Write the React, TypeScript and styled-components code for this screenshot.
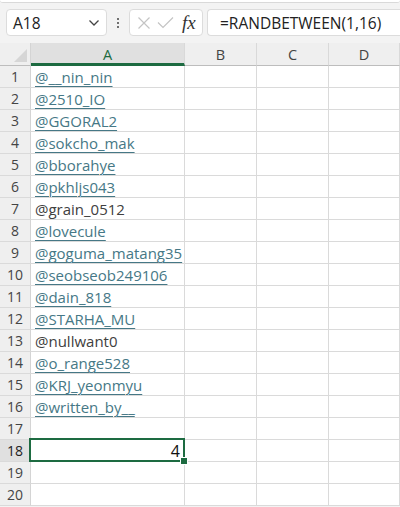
import React from "react";
import styled, { createGlobalStyle } from "styled-components";

const Global = createGlobalStyle`
  html, body { margin: 0; padding: 0; background: #f3f3f3; }
  body { font-family: "Open Sans", "Noto Sans", sans-serif; overflow: hidden; }
  * { box-sizing: border-box; }
`;

const Page = styled.div`
  width: 400px;
  height: 507px;
  background: #f3f3f3;
  display: flex;
  flex-direction: column;
  overflow: hidden;
`;

const RibbonEdge = styled.div`
  height: 3px;
  background: #ffffff;
  border-bottom: 1px solid #d9d9d9;
  border-radius: 0 0 6px 6px;
`;

const FormulaBar = styled.div`
  display: flex;
  align-items: center;
  height: 27px;
  margin-top: 6px;
  padding-left: 6px;
`;

const NameBox = styled.div`
  width: 101px;
  height: 27px;
  background: #fff;
  border: 1px solid #dcdcdc;
  border-radius: 4px;
  display: flex;
  align-items: center;
  justify-content: space-between;
  padding: 0 6px 0 6px;
  font-size: 15.5px;
  color: #222;
`;

const Dots = styled.div`
  width: 22px;
  display: flex;
  flex-direction: column;
  align-items: center;
  gap: 2px;
  span {
    width: 2px;
    height: 2px;
    background: #444;
    border-radius: 1px;
  }
`;

const FxBox = styled.div`
  width: 74px;
  height: 27px;
  background: #fff;
  border: 1px solid #dcdcdc;
  border-radius: 4px;
  display: flex;
  align-items: center;
  padding-left: 7px;
  gap: 6px;
`;

const FxLabel = styled.span`
  font-family: "Liberation Serif", "DejaVu Serif", serif;
  font-style: italic;
  font-size: 19px;
  color: #333;
  margin-left: 2px;
`;

const FormulaInput = styled.div`
  flex: 1;
  margin-left: 4px;
  height: 27px;
  background: #fff;
  border: 1px solid #dcdcdc;
  border-right: none;
  border-radius: 4px 0 0 4px;
  display: flex;
  align-items: center;
  padding-left: 12px;
  font-size: 15.5px;
  color: #222;
`;

const Sheet = styled.div`
  margin-top: 7px;
  display: grid;
  grid-template-columns: 31px 154px 72px 72px 1fr;
  grid-auto-rows: 22px;
  grid-template-rows: 23px;
  background: #fff;
`;

const Corner = styled.div`
  background: #efefef;
  border-right: 1px solid #d4d4d4;
  border-bottom: 1px solid #bdbdbd;
  display: flex;
  align-items: flex-end;
  justify-content: flex-end;
  padding: 0 3px 3px 0;
`;

const ColHead = styled.div<{ $active?: boolean }>`
  background: ${(p) => (p.$active ? "#e0e0e0" : "#efefef")};
  border-right: 1px solid #d9d9d9;
  border-bottom: ${(p) => (p.$active ? "3px solid #1d6b41" : "1px solid #bdbdbd")};
  display: flex;
  align-items: center;
  justify-content: center;
  font-size: 14.5px;
  color: ${(p) => (p.$active ? "#1d6b41" : "#444")};
  padding-top: ${(p) => (p.$active ? "2px" : "0")};
`;

const RowHead = styled.div<{ $active?: boolean }>`
  background: ${(p) => (p.$active ? "#e0e0e0" : "#efefef")};
  border-right: 1px solid #d4d4d4;
  border-bottom: 1px solid #dadada;
  display: flex;
  align-items: center;
  justify-content: center;
  font-size: 14px;
  color: ${(p) => (p.$active ? "#222" : "#444")};
`;

const Cell = styled.div<{ $align?: "left" | "right"; $selected?: boolean }>`
  position: relative;
  border-right: 1px solid #dadada;
  border-bottom: 1px solid #dadada;
  display: flex;
  align-items: center;
  justify-content: ${(p) => (p.$align === "right" ? "flex-end" : "flex-start")};
  padding: 1px 4px 0 4px;
  font-size: 15px;
  color: #111;
  white-space: nowrap;
  ${(p) =>
    p.$selected
      ? `
    font-size: 16px;
    &::after {
      content: "";
      position: absolute;
      left: -2px;
      top: -2px;
      right: -1px;
      bottom: -1px;
      border: 2px solid #1d6b41;
    }
    &::before {
      content: "";
      position: absolute;
      right: -4px;
      bottom: -4px;
      width: 6px;
      height: 6px;
      background: #1d6b41;
      border: 1px solid #fff;
      z-index: 2;
    }
  `
      : ""}
`;

const Link = styled.span`
  color: #467886;
  text-decoration: underline;
  text-decoration-thickness: 1px;
  text-underline-offset: 3px;
`;

const Plain = styled.span`
  color: #404040;
`;

type Entry = { text: string; link: boolean };

const entries: Entry[] = [
  { text: "@__nin_nin", link: true },
  { text: "@2510_IO", link: true },
  { text: "@GGORAL2", link: true },
  { text: "@sokcho_mak", link: true },
  { text: "@bborahye", link: true },
  { text: "@pkhljs043", link: true },
  { text: "@grain_0512", link: false },
  { text: "@lovecule", link: true },
  { text: "@goguma_matang35", link: true },
  { text: "@seobseob249106", link: true },
  { text: "@dain_818", link: true },
  { text: "@STARHA_MU", link: true },
  { text: "@nullwant0", link: false },
  { text: "@o_range528", link: true },
  { text: "@KRJ_yeonmyu", link: true },
  { text: "@written_by__", link: true },
];

const Chevron = () => (
  <svg width="12" height="8" viewBox="0 0 12 8">
    <path d="M1.5 1.5 L6 6 L10.5 1.5" fill="none" stroke="#444" strokeWidth="1.3" />
  </svg>
);

const CancelIcon = () => (
  <svg width="14" height="14" viewBox="0 0 14 14">
    <path d="M1.5 1.5 L12.5 12.5 M12.5 1.5 L1.5 12.5" stroke="#c4c4c4" strokeWidth="1.2" />
  </svg>
);

const CheckIcon = () => (
  <svg width="17" height="13" viewBox="0 0 17 13">
    <path d="M1 6.5 L6 11.5 L16 1.5" fill="none" stroke="#c4c4c4" strokeWidth="1.2" />
  </svg>
);

const CornerTriangle = () => (
  <svg width="13" height="13" viewBox="0 0 13 13">
    <path d="M13 0 L13 13 L0 13 Z" fill="#d6d6d6" />
  </svg>
);

export default function App() {
  const rows = Array.from({ length: 20 }, (_, i) => i + 1);
  return (
    <Page>
      <Global />
      <RibbonEdge />
      <FormulaBar>
        <NameBox>
          <span>A18</span>
          <Chevron />
        </NameBox>
        <Dots>
          <span />
          <span />
          <span />
        </Dots>
        <FxBox>
          <CancelIcon />
          <CheckIcon />
          <FxLabel>fx</FxLabel>
        </FxBox>
        <FormulaInput>=RANDBETWEEN(1,16)</FormulaInput>
      </FormulaBar>
      <Sheet>
        <Corner>
          <CornerTriangle />
        </Corner>
        <ColHead $active>A</ColHead>
        <ColHead>B</ColHead>
        <ColHead>C</ColHead>
        <ColHead>D</ColHead>
        {rows.map((r) => {
          const e = entries[r - 1];
          const sel = r === 18;
          return (
            <React.Fragment key={r}>
              <RowHead $active={sel}>{r}</RowHead>
              <Cell $selected={sel} $align={sel ? "right" : "left"}>
                {e ? e.link ? <Link>{e.text}</Link> : <Plain>{e.text}</Plain> : sel ? "4" : null}
              </Cell>
              <Cell />
              <Cell />
              <Cell />
            </React.Fragment>
          );
        })}
      </Sheet>
    </Page>
  );
}
